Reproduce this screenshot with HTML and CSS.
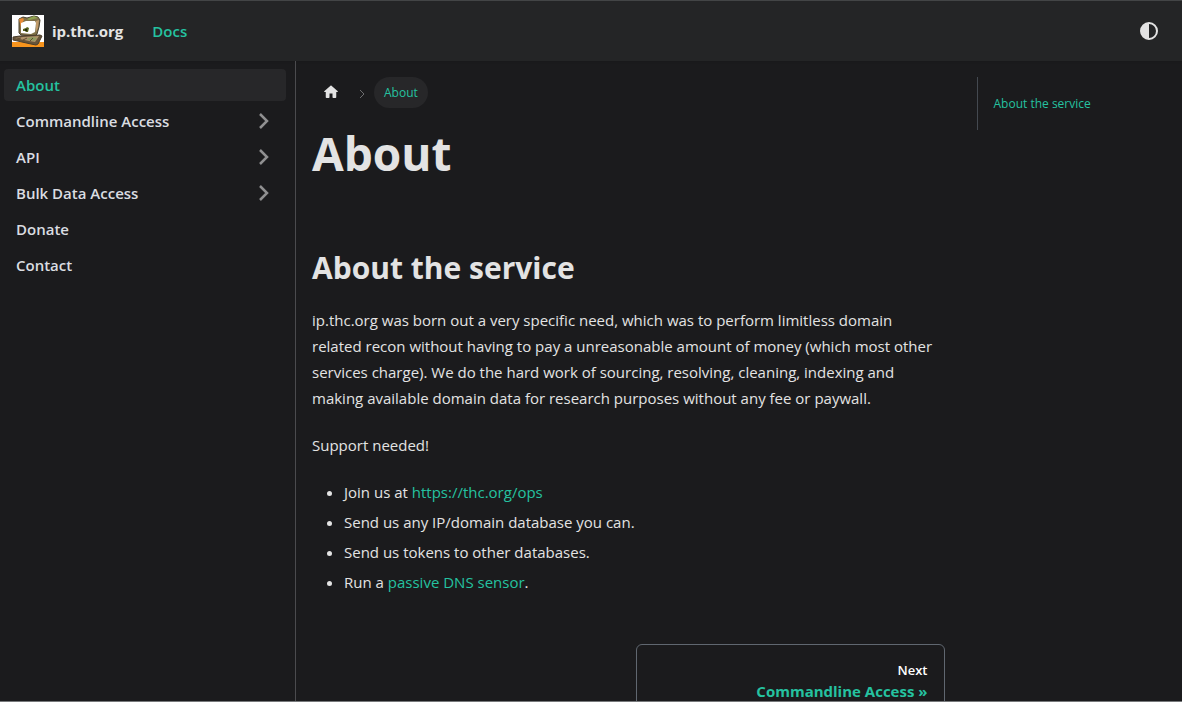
FILE: index.html
```html
<!DOCTYPE html>
<html lang="en">
  <head>
    <meta charset="UTF-8" />
    <title>About | ip.thc.org</title>
    <meta name="viewport" content="width=device-width, initial-scale=1.0" />
    <link rel="stylesheet" href="styles.css">
  </head>
  <body>
    <header class="navbar">
      <a class="navbar-brand" href="#">
        <svg class="navbar-logo" viewBox="0 0 32 32" aria-hidden="true">
          <rect width="32" height="32" fill="#fff" />
          <rect y="27" width="32" height="5" fill="#f7941d" />
          <path d="M7 4l4-2 4 1 7-2 4 1 2 3-1 7-2 7-2 2-14-1-2-2z" fill="#80724a" stroke="#4b4230" />
          <path d="M7 4l4-1 1 2-2 3-1 5z" fill="#e88a35" />
          <path d="M15 4l7-3 4 2-9 2z" fill="#8fa552" />
          <path d="M24 6l3-1-1 8-2 4z" fill="#c09a6a" />
          <path d="M9 8l5-2 9 0 1 2-1 9-4 2-10-1z" fill="#fff" />
          <path d="M11 14l3-1 1-1 2 1-1 4-2 0-1-1-2 0z" fill="#55621c" />
          <circle cx="14" cy="15" r="1" fill="#14170a" />
          <path d="M1 22l7-1 20-1 2 1-4 8-2 1-5-1-18-4z" fill="#67553a" stroke="#4a3d2b" />
          <path d="M3 23l8-1 16-1-4 6-6-1z" fill="#b0936b" />
          <path d="M14 24l6-2 5 1-3 3z" fill="#8d9c60" />
          <path d="M5 24l4-1M11 25l4-2M18 26l3-3" stroke="#5f4c33" />
        </svg>
        <b class="navbar-title">ip.thc.org</b>
      </a>
      <a class="navbar-item" href="#">Docs</a>
      <button class="color-toggle" type="button" aria-label="Switch color mode">
        <svg width="24" height="24" viewBox="0 0 24 24" fill="currentColor">
          <path d="M12 21a9 9 0 1 0 0-18 9 9 0 0 0 0 18zm0-16a7 7 0 0 1 0 14z" />
        </svg>
      </button>
    </header>

    <div class="docs">
      <aside class="sidebar">
        <nav aria-label="Docs sidebar">
          <ul class="menu">
            <li><a class="menu-link active" href="#">About</a></li>
            <li><a class="menu-link has-items" href="#">Commandline Access
              <svg width="20" height="20" viewBox="0 0 20 20"><path d="M6 3l7 7-7 7" /></svg></a></li>
            <li><a class="menu-link has-items" href="#">API
              <svg width="20" height="20" viewBox="0 0 20 20"><path d="M6 3l7 7-7 7" /></svg></a></li>
            <li><a class="menu-link has-items" href="#">Bulk Data Access
              <svg width="20" height="20" viewBox="0 0 20 20"><path d="M6 3l7 7-7 7" /></svg></a></li>
            <li><a class="menu-link" href="#">Donate</a></li>
            <li><a class="menu-link" href="#">Contact</a></li>
          </ul>
        </nav>
      </aside>

      <main class="doc-main">
        <div class="doc-content">
          <nav class="breadcrumbs" aria-label="Breadcrumbs">
            <a class="breadcrumb-home" href="#" aria-label="Home page">
              <svg width="18" height="18" viewBox="0 0 24 24" fill="currentColor">
                <path d="M10 19v-5h4v5c0 .55.45 1 1 1h3c.55 0 1-.45 1-1v-7h1.700c.46 0 .68-.57.33-.87L12.670 3.600c-.38-.34-.96-.34-1.340 0l-8.360 7.530c-.34.3-.13.87.33.87H5v7c0 .55.45 1 1 1h3c.55 0 1-.45 1-1z" />
              </svg>
            </a>
            <svg class="breadcrumb-sep" width="8" height="8" viewBox="0 0 8 8"><path d="M2 0l4 4-4 4" /></svg>
            <span class="breadcrumb-current">About</span>
          </nav>

          <article>
            <h1>About</h1>
            <h2 id="about-the-service">About the service</h2>
            <p>
              ip.thc.org was born out a very specific need, which was to perform
              limitless domain related recon without having to pay a unreasonable
              amount of money (which most other services charge). We do the hard
              work of sourcing, resolving, cleaning, indexing and making available
              domain data for research purposes without any fee or paywall.
            </p>
            <p>Support needed!</p>
            <ul class="support-list">
              <li>Join us at <a href="#">https://thc.org/ops</a></li>
              <li>Send us any IP/domain database you can.</li>
              <li>Send us tokens to other databases.</li>
              <li>Run a <a href="#">passive DNS sensor</a>.</li>
            </ul>
          </article>

          <nav class="pagination" aria-label="Docs pages">
            <a class="pagination-link" href="#">
              <span class="pagination-sublabel">Next</span>
              <span class="pagination-label">Commandline Access »</span>
            </a>
          </nav>
        </div>

        <div class="toc-column">
          <div class="toc">
            <a href="#about-the-service">About the service</a>
          </div>
        </div>
      </main>
    </div>
  </body>
</html>
```

FILE: styles.css
```css
* {
  box-sizing: border-box;
}

body {
  display: flex;
  flex-direction: column;
  height: 100vh;
  margin: 0;
  overflow: hidden;
  border-top: 1px solid #434546;
  border-bottom: 1px solid #77797b;
  background-color: #1b1b1d;
  color: #e3e3e3;
  font-family: "Open Sans", "Noto Sans", sans-serif;
  font-size: 15px;
  line-height: 26px;
}

a {
  color: #25c2a0;
  text-decoration: none;
}

ul {
  margin: 0;
  padding: 0;
}

/* Navbar */
.navbar {
  display: flex;
  flex-shrink: 0;
  align-items: center;
  height: 60px;
  padding: 0 17px 0 12px;
  background-color: #242526;
  box-shadow: 0 1px 2px rgba(0, 0, 0, 0.1);
}

.navbar-brand {
  display: flex;
  align-items: center;
  gap: 8px;
  margin-right: 17px;
  color: #e3e3e3;
}

.navbar-logo {
  width: 32px;
  height: 32px;
}

.navbar-item {
  padding: 4px 12px;
  font-weight: 600;
}

.color-toggle {
  display: flex;
  align-items: center;
  justify-content: center;
  width: 32px;
  height: 32px;
  margin-left: auto;
  padding: 0;
  border: none;
  border-radius: 50%;
  background: none;
  color: #e3e3e3;
  cursor: pointer;
}

/* Layout */
.docs {
  display: flex;
  flex: 1;
  min-height: 0;
}

.sidebar {
  flex: 0 0 296px;
  padding: 8px 9px 8px 4px;
  border-right: 1px solid #4b4b4e;
}

.doc-main {
  display: flex;
  flex: 1;
  min-width: 0;
  padding-top: 16px;
}

.doc-content {
  flex: 0 0 75%;
  padding: 0 16px;
}

.toc-column {
  flex: 0 0 25%;
  padding: 0 16px;
}

/* Sidebar menu */
.menu {
  display: flex;
  flex-direction: column;
  gap: 4px;
  list-style: none;
}

.menu-link {
  display: flex;
  align-items: center;
  justify-content: space-between;
  height: 32px;
  padding: 0 12px;
  border-radius: 4px;
  color: #dadde1;
  font-weight: 600;
}

.menu-link.active {
  background-color: #272729;
  color: #25c2a0;
}

.menu-link svg {
  fill: none;
  stroke: #909091;
  stroke-width: 2.500;
}

/* Breadcrumbs */
.breadcrumbs {
  display: flex;
  align-items: center;
  height: 31px;
  margin-bottom: 15px;
  font-size: 12px;
}

.breadcrumb-home {
  display: flex;
  padding: 0 10px 2px;
  color: #e3e3e3;
}

.breadcrumb-sep {
  margin: 2px 8px 0;
  fill: none;
  stroke: #6d6d6f;
}

.breadcrumb-current {
  padding: 3px 10px 2px;
  border-radius: 16px;
  background-color: #272729;
  color: #25c2a0;
}

/* Article */
h1 {
  margin: 0 0 65px;
  font-size: 46px;
  line-height: 60px;
}

h2 {
  margin: 0 0 19px;
  font-size: 30px;
  line-height: 40px;
}

p {
  margin: 0 0 21px;
}

.support-list {
  padding-left: 32px;
}

.support-list li + li {
  margin-top: 4px;
}

/* Pagination */
.pagination {
  display: grid;
  grid-template-columns: 1fr 1fr;
  gap: 16px;
  margin-top: 49px;
}

.pagination-link {
  display: flex;
  flex-direction: column;
  grid-column: 2;
  padding: 15px 16px;
  border: 1px solid #606770;
  border-radius: 6px;
  font-weight: 700;
  line-height: 21px;
  text-align: right;
}

.pagination-sublabel {
  color: #fff;
  font-size: 13px;
  font-weight: 600;
}

/* Table of contents */
.toc {
  padding: 16px;
  border-left: 1px solid #444950;
  font-size: 12px;
  line-height: 21px;
}

@media (max-width: 996px) {
  .sidebar,
  .toc-column {
    display: none;
  }

  .doc-content {
    flex: 1;
  }
}
```
